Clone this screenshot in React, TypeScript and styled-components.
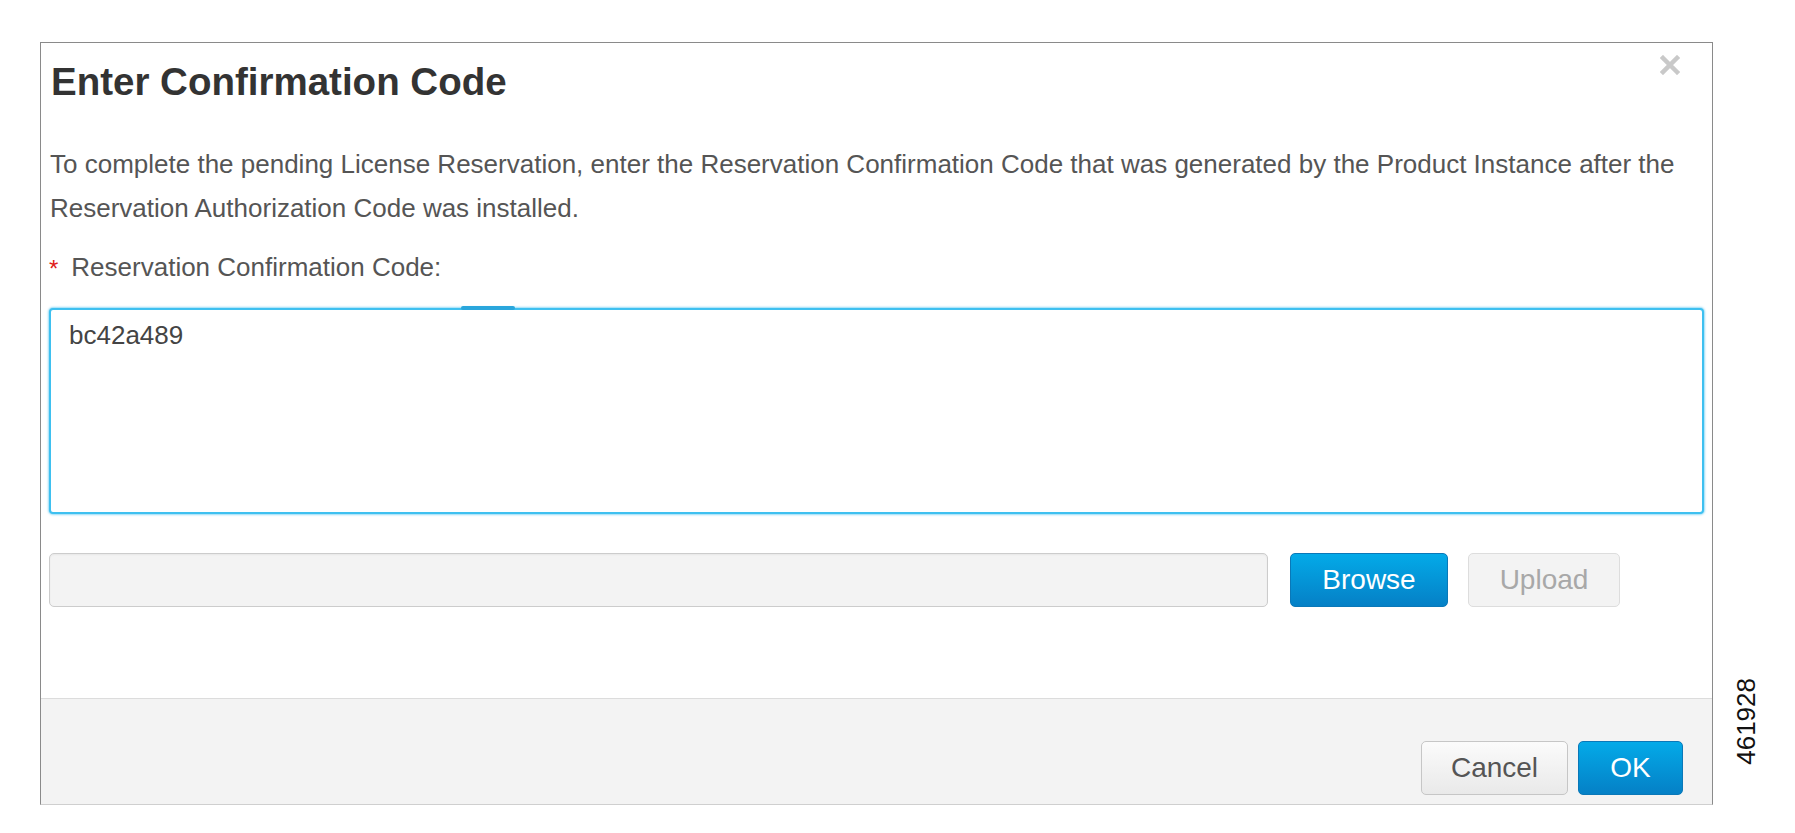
import React from 'react';
import styled, { createGlobalStyle } from 'styled-components';

const GlobalStyle = createGlobalStyle`
  html, body {
    margin: 0;
    padding: 0;
    background: #ffffff;
  }
  body {
    font-family: "Liberation Sans", Arial, Helvetica, sans-serif;
  }
`;

const App: React.FC = () => {
  return (
    <>
      <GlobalStyle />
      <Stage>
        <Dialog>
          <Header>
            <Title>Enter Confirmation Code</Title>
            <CloseButton aria-label="Close">
              <svg width="20" height="20" viewBox="0 0 20 20">
                <path d="M3 3 L17 17 M17 3 L3 17" stroke="#c9c9c9" strokeWidth="4.5" strokeLinecap="square" />
              </svg>
            </CloseButton>
          </Header>
          <Body>
            <Intro>
              To complete the pending License Reservation, enter the Reservation Confirmation Code that was generated by the Product Instance after the
              Reservation Authorization Code was installed.
            </Intro>
            <Label>
              <Required>*</Required>
              Reservation Confirmation Code:
            </Label>
            <CodeField>
              <CodeArea defaultValue="bc42a489" />
            </CodeField>
            <FileRow>
              <FileName readOnly value="" />
              <Button variant="primary" width={158}>Browse</Button>
              <Button variant="disabled" width={152}>Upload</Button>
            </FileRow>
          </Body>
          <Footer>
            <Button variant="default" width={147}>Cancel</Button>
            <Button variant="primary" width={105}>OK</Button>
          </Footer>
        </Dialog>
        <SideNote>
          <FigureId>461928</FigureId>
        </SideNote>
      </Stage>
    </>
  );
};

export default App;

const Stage = styled.div`
  display: flex;
  align-items: stretch;
  padding: 42px 0 0 40px;
`;

const Dialog = styled.div`
  width: 1673px;
  height: 763px;
  box-sizing: border-box;
  display: flex;
  flex-direction: column;
  background: #ffffff;
  border: 1px solid #8a8a8a;
  border-bottom-color: #cfcfcf;
`;

const Header = styled.div`
  display: flex;
  justify-content: space-between;
  align-items: flex-start;
  padding: 18px 32px 0 10px;
`;

const Title = styled.h2`
  margin: 0;
  font-size: 38.5px;
  line-height: 42px;
  font-weight: bold;
  color: #333333;
`;

const CloseButton = styled.button`
  background: transparent;
  border: none;
  padding: 0;
  margin-top: -6px;
  cursor: pointer;
  display: flex;
`;

const Body = styled.div`
  flex: 1;
  padding: 39px 8px 0 8px;
  display: flex;
  flex-direction: column;
`;

const Intro = styled.p`
  margin: 0 0 20px 1px;
  font-size: 26px;
  line-height: 44px;
  color: #555555;
`;

const Label = styled.div`
  display: flex;
  align-items: center;
  gap: 13px;
  font-size: 26px;
  line-height: 30px;
  color: #555555;
`;

const Required = styled.span`
  color: #e0201b;
  font-size: 24px;
  line-height: 30px;
  padding-top: 4px;
`;

const CodeField = styled.div`
  position: relative;
  margin-top: 24px;

  &::before {
    content: '';
    position: absolute;
    top: -2px;
    left: 412px;
    width: 54px;
    height: 4px;
    border-radius: 2px;
    background: #2aa6dc;
  }
`;

const CodeArea = styled.textarea`
  display: block;
  width: 100%;
  height: 206px;
  box-sizing: border-box;
  resize: none;
  border: 2px solid #3ec0f0;
  border-radius: 4px;
  box-shadow: 0 0 2px 1px rgba(62, 192, 240, 0.55);
  padding: 10px 18px;
  font-family: "Liberation Sans", Arial, sans-serif;
  font-size: 26px;
  line-height: 30px;
  color: #444444;
  outline: none;
`;

const FileRow = styled.div`
  display: flex;
  align-items: center;
  gap: 20px;
  margin-top: 39px;
`;

const FileName = styled.input`
  width: 1219px;
  height: 54px;
  box-sizing: border-box;
  margin-right: 2px;
  background: #f3f3f3;
  border: 1px solid #cccccc;
  border-radius: 5px;
  box-shadow: inset 0 1px 2px rgba(0, 0, 0, 0.05);
`;

const Button = styled.button<{ variant: 'primary' | 'default' | 'disabled'; width: number }>`
  width: ${p => p.width}px;
  height: 54px;
  box-sizing: border-box;
  border-radius: 5px;
  font-family: "Liberation Sans", Arial, sans-serif;
  font-size: 28px;
  cursor: pointer;
  ${p =>
    p.variant === 'primary'
      ? `
    background: linear-gradient(#03aae8, #0580c6);
    border: 1px solid #0a78b8;
    color: #ffffff;
  `
      : p.variant === 'default'
      ? `
    background: linear-gradient(#fbfbfb, #e9e9e9);
    border: 1px solid #c6c6c6;
    color: #555555;
  `
      : `
    background: #f3f3f3;
    border: 1px solid #dddddd;
    color: #a8a8a8;
    cursor: default;
  `}
`;

const Footer = styled.div`
  height: 106px;
  box-sizing: border-box;
  display: flex;
  justify-content: flex-end;
  align-items: flex-end;
  gap: 10px;
  padding: 0 29px 9px 0;
  background: #f3f3f3;
  border-top: 1px solid #dcdcdc;
`;

const SideNote = styled.div`
  display: flex;
  align-items: flex-end;
  padding: 0 0 40px 18px;
`;

const FigureId = styled.span`
  writing-mode: vertical-rl;
  transform: rotate(180deg);
  font-size: 26px;
  color: #111111;
`;
